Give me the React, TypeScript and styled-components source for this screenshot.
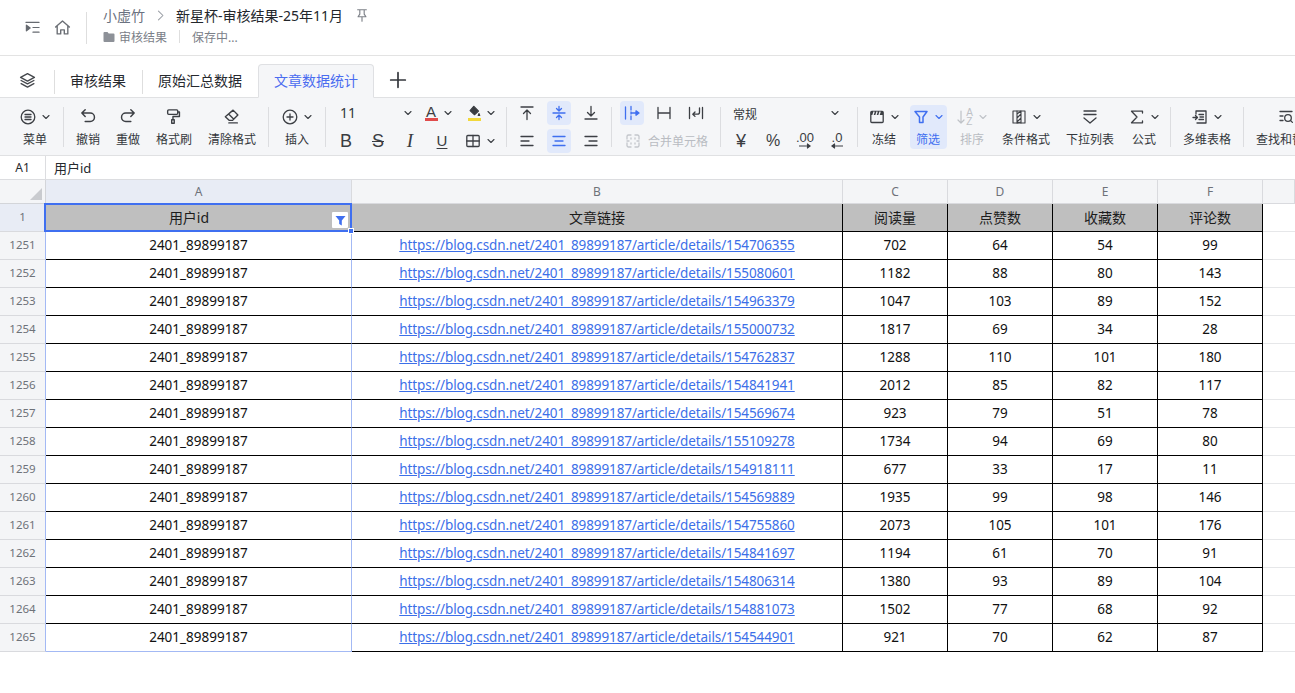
import React from "react";
import styled, { createGlobalStyle } from "styled-components";

const FONT = `"Noto Sans", "Noto Sans CJK SC", sans-serif`;
const INK = "#3c3f44";
const BLUE = "#3f6ff0";

const Global = createGlobalStyle`
  html, body { margin: 0; padding: 0; background: #fff; overflow: hidden; }
  body { font-family: ${FONT}; width: 1295px; height: 693px; }
`;

const Page = styled.div`
  width: 1295px;
  height: 693px;
  overflow: hidden;
  display: flex;
  flex-direction: column;
  background: #fff;
`;

/* ---------- header ---------- */
const TopBar = styled.header`
  height: 55px;
  border-bottom: 1px solid #e3e3e3;
  display: flex;
  align-items: center;
  padding-left: 25px;
  flex: none;
`;
const NavIcons = styled.div`
  display: flex;
  align-items: center;
  gap: 14px;
  width: 61px;
  height: 32px;
  border-right: 1px solid #dedede;
  margin-right: 16px;
`;
const DocInfo = styled.div`
  display: flex;
  flex-direction: column;
  gap: 3px;
  margin-top: -5px;
`;
const Crumbs = styled.div`
  display: flex;
  align-items: center;
  height: 20px;
  font-size: 14px;
  color: #23262b;
`;
const Crumb = styled.span`
  color: #6b7280;
`;
const CrumbArrow = styled.span`
  display: flex;
  margin: 0 9px 0 9px;
`;
const PinWrap = styled.span`
  display: flex;
  margin-left: 12px;
`;
const DocMeta = styled.div`
  display: flex;
  align-items: center;
  height: 17px;
  font-size: 12px;
  color: #7b8088;
`;
const MetaDivider = styled.span`
  width: 1px;
  height: 13px;
  background: #dedede;
  margin: 0 12px;
`;
const FolderWrap = styled.span`
  display: flex;
  margin-right: 4px;
`;

/* ---------- tabs ---------- */
const TabBar = styled.nav`
  height: 42px;
  display: flex;
  align-items: flex-end;
  flex: none;
  padding-left: 19px;
  border-bottom: 1px solid #e0e1e3;
  box-sizing: border-box;
`;
const LayersBtn = styled.span`
  display: flex;
  align-items: center;
  height: 34px;
  width: 35px;
`;
const Tab = styled.span<{ $active?: boolean }>`
  box-sizing: border-box;
  flex: none;
  height: ${(p) => (p.$active ? "34px" : "24px")};
  margin-bottom: ${(p) => (p.$active ? "-1px" : "3px")};
  padding: 0 16px ${(p) => (p.$active ? "2px" : "4px")} 15px;
  display: flex;
  align-items: center;
  font-size: 14px;
  color: ${(p) => (p.$active ? "#4a6cf0" : "#26292e")};
  border-left: 1px solid #dedede;
  ${(p) =>
    p.$active &&
    `background:#f5f6f8;border:1px solid #dfe0e3;border-bottom-color:#f5f6f8;border-radius:4px 4px 0 0;padding-right:15px;`}
`;
const PlusBtn = styled.span`
  display: flex;
  align-items: center;
  height: 34px;
  margin-left: 15px;
`;

/* ---------- toolbar ---------- */
const Toolbar = styled.div`
  height: 58px;
  flex: none;
  box-sizing: border-box;
  background: #f5f6f8;
  border-bottom: 1px solid #e0e1e3;
  display: flex;
  align-items: center;
  padding-left: 11px;
  white-space: nowrap;
  overflow: hidden;
`;
const Sep = styled.span`
  flex: none;
  width: 1px;
  height: 40px;
  background: #dcdde0;
  margin: 0 4px;
`;
const Tool = styled.div<{ $w: number }>`
  flex: none;
  width: ${(p) => p.$w}px;
  display: flex;
  justify-content: center;
`;
const ToolInner = styled.div<{ $on?: boolean; $off?: boolean }>`
  display: flex;
  flex-direction: column;
  align-items: center;
  height: 44px;
  padding: 0 3.5px;
  border-radius: 4px;
  background: ${(p) => (p.$on ? "#e1e9fb" : "transparent")};
  color: ${(p) => (p.$on ? BLUE : p.$off ? "#b9bcc2" : "#33363b")};
`;
const ToolIcon = styled.div`
  height: 24px;
  display: flex;
  align-items: center;
  gap: 6px;
`;
const ToolLabel = styled.div`
  font-size: 12px;
  line-height: 18px;
  margin-top: 2px;
`;
const CellGrid = styled.div<{ $w: number; $cols: string }>`
  flex: none;
  width: ${(p) => p.$w}px;
  display: grid;
  grid-template-columns: ${(p) => p.$cols};
  grid-auto-rows: 24px;
  row-gap: 4px;
`;
const GridBtn = styled.div<{ $on?: boolean }>`
  display: flex;
  align-items: center;
  justify-content: center;
  justify-self: center;
  width: 24px;
  height: 24px;
  border-radius: 4px;
  background: ${(p) => (p.$on ? "#e1e9fb" : "transparent")};
`;
const FontSelect = styled.div`
  width: 100%;
  display: flex;
  align-items: center;
  justify-content: space-between;
  font-size: 14px;
  color: #33363b;
  padding: 0 4px 0 10px;
`;
const FontRow = styled.div`
  grid-column: 1 / -1;
  display: flex;
  align-items: center;
`;
const RowSlot = styled.div<{ $w: number }>`
  flex: none;
  width: ${(p) => p.$w}px;
  display: flex;
  align-items: center;
  justify-content: center;
  gap: 6px;
`;
const Glyph = styled.span<{ $deco?: string; $size?: number }>`
  font-family: "Liberation Sans", sans-serif;
  font-size: ${(p) => p.$size ?? 18}px;
  line-height: 18px;
  color: #3a3d42;
  text-decoration: ${(p) => p.$deco ?? "none"};
  text-decoration-thickness: 1px;
  text-underline-offset: 2px;
`;
const ItalicGlyph = styled.span`
  font-family: "Liberation Serif", serif;
  font-style: italic;
  font-size: 19px;
  line-height: 18px;
  color: #3a3d42;
`;
const ColorGlyph = styled.span<{ $bar: string }>`
  font-family: "Liberation Sans", sans-serif;
  font-size: 15px;
  line-height: 13px;
  height: 16px;
  width: 13px;
  box-sizing: border-box;
  text-align: center;
  color: #3a3d42;
  border-bottom: 3px solid ${(p) => p.$bar};
`;
const BucketWrap = styled.span<{ $bar: string }>`
  display: flex;
  height: 16px;
  box-sizing: border-box;
  border-bottom: 3px solid ${(p) => p.$bar};
`;
const MergeBtn = styled.div`
  grid-column: 1 / -1;
  display: flex;
  align-items: center;
  gap: 7px;
  padding-left: 9px;
  font-size: 12px;
  color: #b9bcc2;
`;
const NumberSelect = styled.div`
  grid-column: 1 / -1;
  display: flex;
  align-items: center;
  justify-content: space-between;
  font-size: 12px;
  color: #33363b;
  padding: 0 14px 0 8px;
`;
const NumberText = styled.span`
  margin-top: 3px;
`;
const NumGlyphStack = styled.span`
  display: flex;
  flex-direction: column;
  align-items: center;
  font-family: "Liberation Sans", sans-serif;
  font-size: 13px;
  line-height: 11px;
  color: #3a3d42;
`;
const SortLetters = styled.span`
  display: flex;
  flex-direction: column;
  align-items: center;
  margin-left: -5px;
  font-family: "Liberation Sans", sans-serif;
  font-size: 10px;
  line-height: 9px;
  color: #bfc2c7;
`;

/* ---------- formula ---------- */
const FormulaBar = styled.div`
  height: 24px;
  flex: none;
  box-sizing: border-box;
  display: flex;
  align-items: center;
  border-bottom: 1px solid #dcdde0;
  font-size: 12px;
  color: #26292e;
`;
const NameBox = styled.div`
  width: 46px;
  height: 100%;
  box-sizing: border-box;
  border-right: 1px solid #dcdde0;
  display: flex;
  align-items: center;
  justify-content: center;
`;
const FormulaText = styled.div`
  padding: 0 0 1px 8px;
  font-size: 13px;
`;

/* ---------- sheet ---------- */
const Sheet = styled.div`
  display: grid;
  grid-template-columns: 46px 306px 491px 105px 105px 105px 105px 1fr;
  grid-template-rows: 24px 28px;
  grid-auto-rows: 28px;
  flex: none;
`;
const Corner = styled.div`
  background: #f4f5f7;
  border-right: 1px solid #d3d5d9;
  border-bottom: 1px solid #d3d5d9;
  box-sizing: border-box;
  position: relative;
  &::after {
    content: "";
    position: absolute;
    right: 3px;
    bottom: 3px;
    border-style: solid;
    border-width: 0 0 12px 12px;
    border-color: transparent transparent #c9cbcf transparent;
  }
`;
const ColHead = styled.div<{ $active?: boolean }>`
  box-sizing: border-box;
  background: ${(p) => (p.$active ? "#e8ecf5" : "#f4f5f7")};
  border-right: 1px solid #d9dade;
  border-bottom: 1px solid #d9dade;
  display: flex;
  align-items: center;
  justify-content: center;
  font-size: 12px;
  color: #6e7279;
`;
const RowHead = styled.div<{ $active?: boolean; $blue?: boolean }>`
  box-sizing: border-box;
  background: ${(p) => (p.$active ? "#e8ecf5" : "#f4f5f7")};
  border-right: 1px solid ${(p) => (p.$blue ? "#a3b9f4" : "#d3d5d9")};
  border-bottom: 1px solid #d9dade;
  display: flex;
  align-items: center;
  justify-content: center;
  padding-bottom: 2px;
  font-size: 11.5px;
  color: #6e7279;
`;
const Cell = styled.div<{ $head?: boolean; $hr?: string; $hb?: string; $shift?: boolean }>`
  box-sizing: border-box;
  background: ${(p) => (p.$head ? "#bfbfbf" : "#fff")};
  border-right: 1px solid ${(p) => p.$hr ?? "#000"};
  border-bottom: 1px solid ${(p) => p.$hb ?? "#000"};
  display: flex;
  align-items: center;
  justify-content: center;
  padding-bottom: ${(p) => (p.$head ? "2px" : "1px")};
  padding-right: ${(p) => (p.$shift ? "19px" : "0")};
  font-size: 13.5px;
  color: #111;
  position: relative;
`;
const HeadText = styled.span`
  font-size: 14px;
  color: #1c1c1c;
`;
const DocLink = styled.a`
  color: #3c6fe8;
  text-decoration: underline;
  font-size: 13.5px;
  letter-spacing: -0.1px;
`;
const Gutter = styled.div`
  box-sizing: border-box;
  border-bottom: 1px solid #e6e7e9;
`;
const Selection = styled.div`
  position: absolute;
  top: -1px;
  left: -2px;
  right: -1px;
  bottom: -1px;
  border: 2px solid ${BLUE};
  pointer-events: none;
  z-index: 5;
`;
const Handle = styled.div`
  position: absolute;
  right: -4px;
  bottom: -4px;
  width: 4px;
  height: 4px;
  background: ${BLUE};
  border: 1px solid #fff;
`;
const FilterBtn = styled.div`
  position: absolute;
  right: 3px;
  bottom: 3px;
  width: 16px;
  height: 16px;
  background: #fff;
  border-radius: 1px;
  display: flex;
  align-items: center;
  justify-content: center;
`;

/* ---------- icons ---------- */
type IconProps = { s?: number; c?: string; w?: number; children?: React.ReactNode };
const Ic = ({ s = 16, c = INK, w = 1.3, children }: IconProps) => (
  <svg width={s} height={s} viewBox="0 0 16 16" fill="none" stroke={c} strokeWidth={w} strokeLinecap="round" strokeLinejoin="round" style={{ display: "block", flex: "none" }}>
    {children}
  </svg>
);
const Chev = ({ c = INK }: { c?: string }) => (
  <svg width="8" height="6" viewBox="0 0 8 6" fill="none" stroke={c} strokeWidth="1.1" strokeLinecap="round" strokeLinejoin="round" style={{ display: "block", flex: "none" }}>
    <path d="M1 1.5l3 3 3-3" />
  </svg>
);

const articleRows = [
  [1251, "154706355", 702, 64, 54, 99],
  [1252, "155080601", 1182, 88, 80, 143],
  [1253, "154963379", 1047, 103, 89, 152],
  [1254, "155000732", 1817, 69, 34, 28],
  [1255, "154762837", 1288, 110, 101, 180],
  [1256, "154841941", 2012, 85, 82, 117],
  [1257, "154569674", 923, 79, 51, 78],
  [1258, "155109278", 1734, 94, 69, 80],
  [1259, "154918111", 677, 33, 17, 11],
  [1260, "154569889", 1935, 99, 98, 146],
  [1261, "154755860", 2073, 105, 101, 176],
  [1262, "154841697", 1194, 61, 70, 91],
  [1263, "154806314", 1380, 93, 89, 104],
  [1264, "154881073", 1502, 77, 68, 92],
  [1265, "154544901", 921, 70, 62, 87],
] as const;

const LabelTool = ({ w, label, icon, chev, on, off }: { w: number; label: string; icon: React.ReactNode; chev?: boolean; on?: boolean; off?: boolean }) => (
  <Tool $w={w}>
    <ToolInner $on={on} $off={off}>
      <ToolIcon>
        {icon}
        {chev && <Chev c={on ? BLUE : off ? "#c0c3c8" : INK} />}
      </ToolIcon>
      <ToolLabel>{label}</ToolLabel>
    </ToolInner>
  </Tool>
);

export default function App() {
  return (
    <Page>
      <Global />
      <TopBar>
        <NavIcons>
          <Ic c="#666a70" s={15}>
            <path d="M1 2.5h14M8.5 8h6.5M8.5 13h6.5" />
            <path d="M1.5 5.5l4 3-4 3z" fill="#666a70" />
          </Ic>
          <Ic c="#6b6f75" s={17}>
            <path d="M1.5 7.5L8 1.8l6.5 5.7M3 6.5V14h3.3v-3.8h3.4V14H13V6.5" />
          </Ic>
        </NavIcons>
        <DocInfo>
          <Crumbs>
            <Crumb>小虚竹</Crumb>
            <CrumbArrow>
              <Ic s={13} c="#9a9ea5"><path d="M5.5 2.5L11 8l-5.5 5.5" /></Ic>
            </CrumbArrow>
            新星杯-审核结果-25年11月
            <PinWrap>
              <Ic s={14} c="#7d8188">
                <path d="M3 2h10M5.5 2v5L3.5 10h9l-2-3V2M8 10v5" />
              </Ic>
            </PinWrap>
          </Crumbs>
          <DocMeta>
            <FolderWrap>
              <svg width="12" height="12" viewBox="0 0 12 12" style={{ display: "block" }}>
                <path d="M0.5 2a1 1 0 011-1h3l1.2 1.4h4.8a1 1 0 011 1V10a1 1 0 01-1 1h-9a1 1 0 01-1-1z" fill="#8d9198" />
              </svg>
            </FolderWrap>
            审核结果
            <MetaDivider />
            保存中...
          </DocMeta>
        </DocInfo>
      </TopBar>

      <TabBar>
        <LayersBtn>
          <Ic s={17} c="#45484d">
            <path d="M8 1.5l6.5 3.5L8 8.5 1.5 5z" />
            <path d="M2 8l6 3.2L14 8M2 11l6 3.2 6-3.2" />
          </Ic>
        </LayersBtn>
        <Tab>审核结果</Tab>
        <Tab>原始汇总数据</Tab>
        <Tab $active>文章数据统计</Tab>
        <PlusBtn>
          <Ic s={18} c="#33363b" w={1.5}><path d="M8 1.5v13M1.5 8h13" /></Ic>
        </PlusBtn>
      </TabBar>

      <Toolbar>
        <LabelTool w={48} label="菜单" chev icon={
          <Ic><circle cx="8" cy="8" r="6.8" /><path d="M5 5.5h6M5 8h6M5 10.5h6" /></Ic>
        } />
        <Sep />
        <LabelTool w={40} label="撤销" icon={
          <Ic s={18}><path d="M5.5 1.5L2.5 4.5l3 3M2.5 4.5H10a3.7 3.7 0 010 7.5H5.5" /></Ic>
        } />
        <LabelTool w={40} label="重做" icon={
          <Ic s={18}><path d="M10.5 1.5l3 3-3 3M13.5 4.5H6a3.7 3.7 0 000 7.5h4.5" /></Ic>
        } />
        <LabelTool w={52} label="格式刷" icon={
          <Ic s={17}><rect x="2.5" y="1.8" width="9.5" height="4.2" rx="1" /><path d="M12 3.8h1.6v4.2H7.5v3M6.3 11h2.4v3.4H6.3z" /></Ic>
        } />
        <LabelTool w={64} label="清除格式" icon={
          <Ic s={17}><path d="M9.5 2L14 6.5 8.8 11.7H6L2.2 8.2zM5.5 5.8L10 10.4M5.5 14h8" /></Ic>
        } />
        <Sep />
        <LabelTool w={48} label="插入" chev icon={
          <Ic><circle cx="8" cy="8" r="6.8" /><path d="M8 5v6M5 8h6" /></Ic>
        } />
        <Sep />

        <CellGrid $w={172} $cols="1fr">
          <FontRow>
            <RowSlot $w={86}><FontSelect>11<Chev /></FontSelect></RowSlot>
            <RowSlot $w={44}>
              <ColorGlyph $bar="#e04b4b">A</ColorGlyph><Chev />
            </RowSlot>
            <RowSlot $w={42}>
              <BucketWrap $bar="#f2d83b">
                <Ic s={13} c="#3a3d42"><path d="M7 1.5l6 6-5 4.5-5.5-5z" fill="#3a3d42" /><path d="M13.5 10.5l1 2.5h-2z" /></Ic>
              </BucketWrap>
              <Chev />
            </RowSlot>
          </FontRow>
          <FontRow>
            <RowSlot $w={32}><Glyph>B</Glyph></RowSlot>
            <RowSlot $w={32}><Glyph $deco="line-through">S</Glyph></RowSlot>
            <RowSlot $w={32}><ItalicGlyph>I</ItalicGlyph></RowSlot>
            <RowSlot $w={32}><Glyph $deco="underline" $size={15}>U</Glyph></RowSlot>
            <RowSlot $w={44}>
              <Ic><rect x="1.8" y="2.5" width="12.4" height="11" rx="1" /><path d="M8 2.5v11M1.8 8h12.4" /></Ic>
              <Chev />
            </RowSlot>
          </FontRow>
        </CellGrid>
        <Sep />

        <CellGrid $w={96} $cols="32px 32px 32px">
          <GridBtn><Ic><path d="M2 2h12M8 14.5V5M4.5 8.5L8 5l3.5 3.5" /></Ic></GridBtn>
          <GridBtn $on><Ic c={BLUE}><path d="M2 8h12M8 1.5v4M5.5 3.5L8 6l2.5-2.5M8 14.5v-4M5.5 12.5L8 10l2.5 2.5" /></Ic></GridBtn>
          <GridBtn><Ic><path d="M2 14h12M8 1.5V11M4.5 7.5L8 11l3.5-3.5" /></Ic></GridBtn>
          <GridBtn><Ic><path d="M2 3.5h12M2 8h8M2 12.5h12" /></Ic></GridBtn>
          <GridBtn $on><Ic c={BLUE}><path d="M2 3.5h12M4 8h8M2 12.5h12" /></Ic></GridBtn>
          <GridBtn><Ic><path d="M2 3.5h12M6 8h8M2 12.5h12" /></Ic></GridBtn>
        </CellGrid>
        <Sep />

        <CellGrid $w={100} $cols="32px 32px 32px">
          <GridBtn $on><Ic c={BLUE}><path d="M1.5 2v12M7 1.5v3.5M7 7v2M7 11v3.5M7.5 8H14" /><path d="M12 5.8L15 8l-3 2.2z" fill={BLUE} /></Ic></GridBtn>
          <GridBtn><Ic><path d="M2 2.5v11M14 2.5v11M2 8h12" /></Ic></GridBtn>
          <GridBtn><Ic><path d="M1.5 2.5v11M14.5 2.5v11M11.5 3v4.2a2 2 0 01-2 2H5M7 7L4.8 9.2 7 11.4" /></Ic></GridBtn>
          <MergeBtn>
            <Ic c="#c3c6cb"><path d="M2 6V3.5A1.5 1.5 0 013.5 2H6M10 2h2.5A1.5 1.5 0 0114 3.5V6M14 10v2.5a1.5 1.5 0 01-1.5 1.5H10M6 14H3.5A1.5 1.5 0 012 12.5V10M2 8h2M12 8h2M6 5v1M10 5v1M6 10v1M10 10v1" /></Ic>
            合并单元格
          </MergeBtn>
        </CellGrid>
        <Sep />

        <CellGrid $w={128} $cols="32px 32px 32px 32px">
          <NumberSelect><NumberText>常规</NumberText><Chev /></NumberSelect>
          <GridBtn><Glyph $size={18}>¥</Glyph></GridBtn>
          <GridBtn><Glyph $size={16}>%</Glyph></GridBtn>
          <GridBtn>
            <NumGlyphStack>.00
              <svg width="14" height="6" viewBox="0 0 14 6" fill="none" stroke={INK} strokeWidth="1.2" style={{ display: "block" }}><path d="M1 3h11M9 .8L12 3 9 5.2" fill={INK} /></svg>
            </NumGlyphStack>
          </GridBtn>
          <GridBtn>
            <NumGlyphStack>.0
              <svg width="14" height="6" viewBox="0 0 14 6" fill="none" stroke={INK} strokeWidth="1.2" style={{ display: "block" }}><path d="M13 3H2M5 .8L2 3l3 2.2" fill={INK} /></svg>
            </NumGlyphStack>
          </GridBtn>
        </CellGrid>
        <Sep />

        <LabelTool w={44} label="冻结" chev icon={
          <Ic><rect x="1.8" y="2.5" width="12.4" height="11" rx="1" /><path d="M2 3h12v3H2z" fill={INK} stroke="none" /><path d="M5 3l-1 3M8 3L7 6M11 3l-1 3" stroke="#f5f6f8" /></Ic>
        } />
        <LabelTool w={44} label="筛选" chev on icon={
          <Ic c={BLUE} w={1.5}><path d="M2 2.5h12L10 8v5.5H6.5V8z" /></Ic>
        } />
        <LabelTool w={44} label="排序" chev off icon={
          <>
            <svg width="8" height="16" viewBox="0 0 8 16" fill="none" stroke="#bfc2c7" strokeWidth="1.2" strokeLinecap="round" strokeLinejoin="round" style={{ display: "block" }}><path d="M4 2v12M1 11l3 3 3-3" /></svg>
            <SortLetters>A<br />Z</SortLetters>
          </>
        } />
        <LabelTool w={64} label="条件格式" chev icon={
          <Ic w={1.1}><rect x="2" y="2" width="12" height="12" /><path d="M6 2v12M10 2v12M6 5l4-3M6 9l4-4M6 13l4-4M6 14l4-1" /></Ic>
        } />
        <LabelTool w={64} label="下拉列表" icon={
          <Ic><path d="M2 2h12M2 5.5h12M2 9l6 5 6-5" /></Ic>
        } />
        <LabelTool w={44} label="公式" chev icon={
          <Ic><path d="M13.5 4V2.2h-11L8 8l-5.5 5.8h11V12" /></Ic>
        } />
        <Sep />
        <LabelTool w={64} label="多维表格" chev icon={
          <Ic><path d="M4 5V2h10v12H5M7 5.5h4.5M8 8h3.5M7 10.5h4.5M1 8.5h4M3.5 6.5l2 2-2 2" /></Ic>
        } />
        <Sep />
        <LabelTool w={76} label="查找和替换" icon={
          <Ic><path d="M2 2.5h12M2 7h3M2 11.5h3" /><circle cx="10" cy="9" r="3.3" /><path d="M12.4 11.4l2 2" /></Ic>
        } />
      </Toolbar>

      <FormulaBar>
        <NameBox>A1</NameBox>
        <FormulaText>用户id</FormulaText>
      </FormulaBar>

      <Sheet>
        <Corner />
        <ColHead $active>A</ColHead>
        <ColHead>B</ColHead>
        <ColHead>C</ColHead>
        <ColHead>D</ColHead>
        <ColHead>E</ColHead>
        <ColHead>F</ColHead>
        <ColHead />

        <RowHead $active>1</RowHead>
        <Cell $head $shift>
          <HeadText>用户id</HeadText>
          <Selection>
            <Handle />
          </Selection>
          <FilterBtn>
            <svg width="11" height="11" viewBox="0 0 11 11" style={{ display: "block" }}>
              <path d="M0.5 1h10L6.8 5.5V10.5L4.2 9V5.5z" fill={BLUE} />
            </svg>
          </FilterBtn>
        </Cell>
        <Cell $head><HeadText>文章链接</HeadText></Cell>
        <Cell $head><HeadText>阅读量</HeadText></Cell>
        <Cell $head><HeadText>点赞数</HeadText></Cell>
        <Cell $head><HeadText>收藏数</HeadText></Cell>
        <Cell $head><HeadText>评论数</HeadText></Cell>
        <Gutter />

        {articleRows.map((r, i) => (
          <React.Fragment key={r[0]}>
            <RowHead $blue>{r[0]}</RowHead>
            <Cell $hr="#a3b9f4" $hb={i === articleRows.length - 1 ? "#a3b9f4" : "#000"}>2401_89899187</Cell>
            <Cell><DocLink>{`https://blog.csdn.net/2401_89899187/article/details/${r[1]}`}</DocLink></Cell>
            <Cell>{r[2]}</Cell>
            <Cell>{r[3]}</Cell>
            <Cell>{r[4]}</Cell>
            <Cell>{r[5]}</Cell>
            <Gutter />
          </React.Fragment>
        ))}
      </Sheet>
    </Page>
  );
}
